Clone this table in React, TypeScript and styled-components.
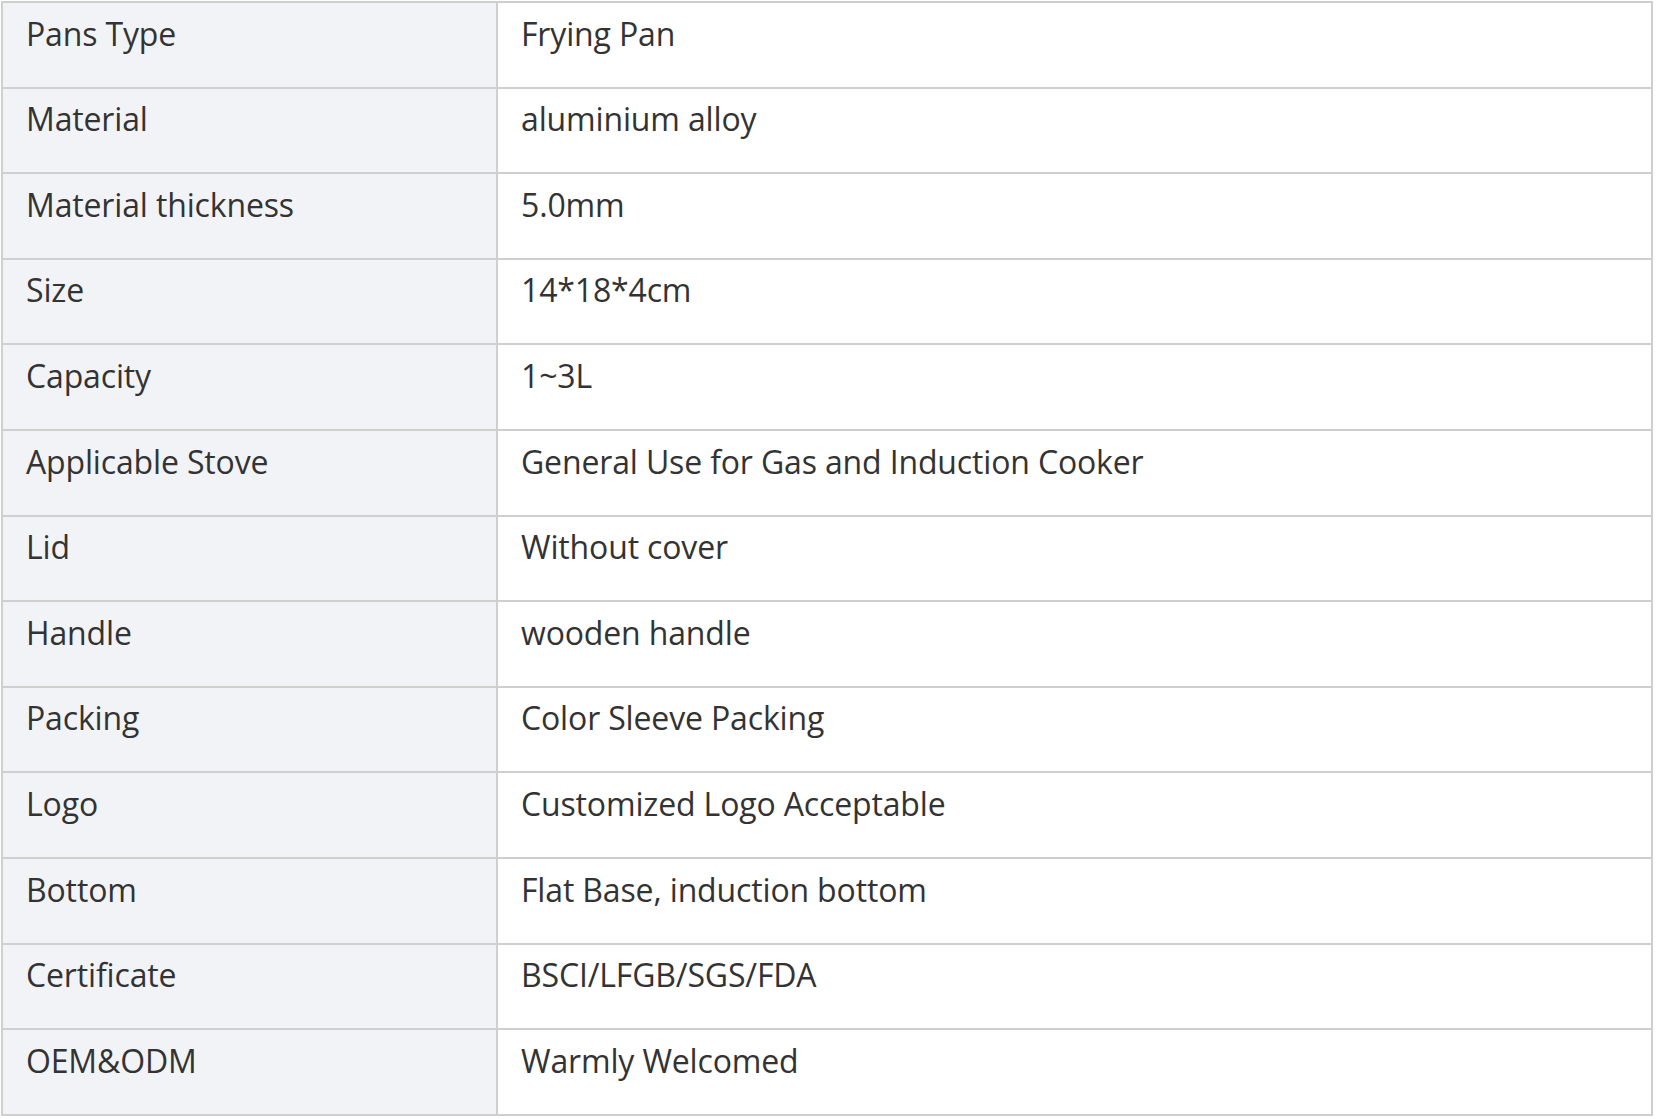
import styled, { createGlobalStyle } from "styled-components";

const GlobalStyle = createGlobalStyle`
    html, body {
        margin: 0;
        padding: 0;
        background: #ffffff;
    }
    body {
        font-family: "Open Sans", "Noto Sans", "Liberation Sans", sans-serif;
        color: #333333;
    }
`;

const Wrapper = styled.div`
    padding: 1px 0 0 1px;
`;

const SpecTable = styled.table`
    width: 1652px;
    border-collapse: collapse;
    table-layout: fixed;
    border: 2px solid #cfcfcf;
`;

const Cell = styled.td<{ $label?: boolean }>`
    box-sizing: border-box;
    border: 2px solid #cfcfcf;
    padding: 9.6px 22px 32px 23px;
    font-size: 32px;
    line-height: 42px;
    letter-spacing: -0.15px;
    color: #333333;
    vertical-align: top;
    white-space: nowrap;
    background-color: ${(props) => (props.$label ? "#f2f3f7" : "#ffffff")};
    width: ${(props) => (props.$label ? "495px" : "auto")};
`;

const specs: [string, string][] = [
    ["Pans Type", "Frying Pan"],
    ["Material", "aluminium alloy"],
    ["Material thickness", "5.0mm"],
    ["Size", "14*18*4cm"],
    ["Capacity", "1~3L"],
    ["Applicable Stove", "General Use for Gas and Induction Cooker"],
    ["Lid", "Without cover"],
    ["Handle", "wooden handle"],
    ["Packing", "Color Sleeve Packing"],
    ["Logo", "Customized Logo Acceptable"],
    ["Bottom", "Flat Base, induction bottom"],
    ["Certificate", "BSCI/LFGB/SGS/FDA"],
    ["OEM&ODM", "Warmly Welcomed"],
];

function App() {
    return (
        <>
            <GlobalStyle />
            <Wrapper>
                <SpecTable>
                    <tbody>
                        {specs.map(([label, value]) => (
                            <tr key={label}>
                                <Cell $label>{label}</Cell>
                                <Cell>{value}</Cell>
                            </tr>
                        ))}
                    </tbody>
                </SpecTable>
            </Wrapper>
        </>
    );
}

export default App;
